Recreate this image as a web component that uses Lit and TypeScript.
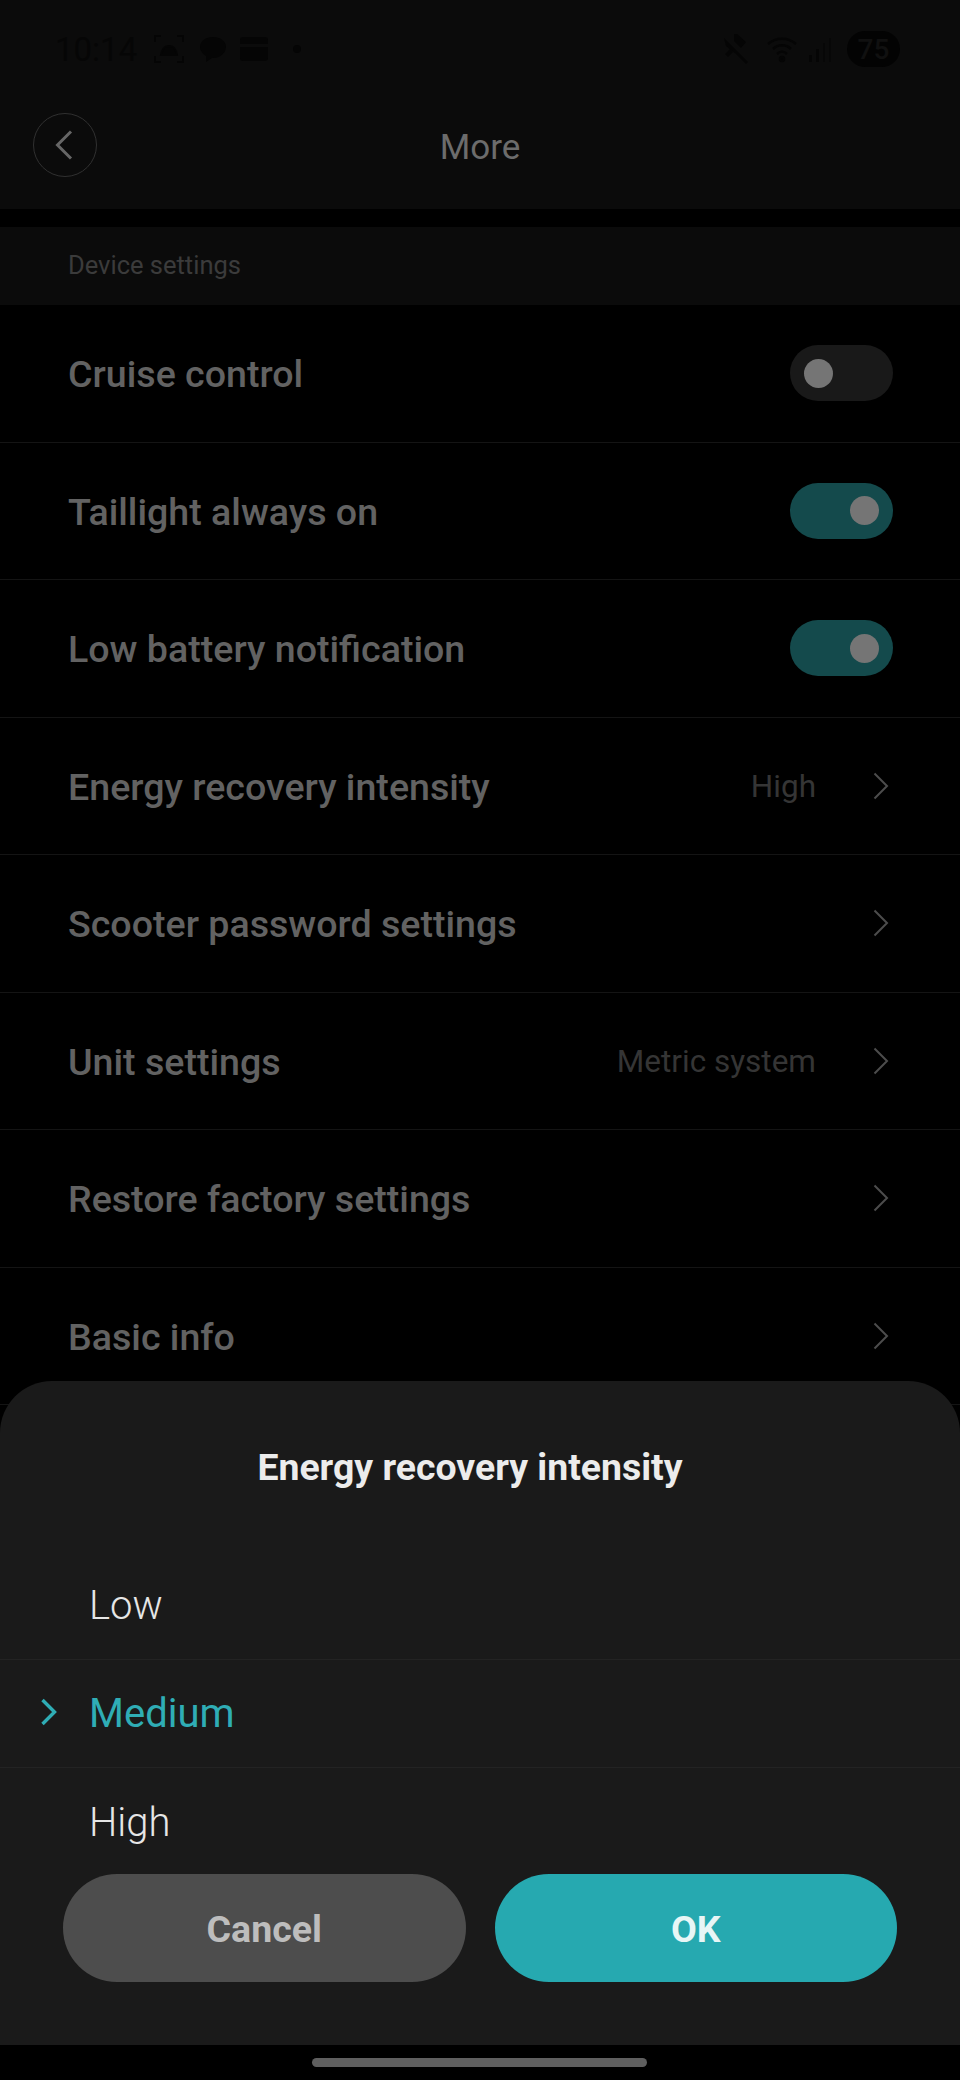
import { LitElement, html, css } from "lit";
import { customElement } from "lit/decorators.js";

type Row = { label: string; toggle?: boolean; on?: boolean; value?: string };

const rows: Row[] = [
  { label: "Cruise control", toggle: true, on: false },
  { label: "Taillight always on", toggle: true, on: true },
  { label: "Low battery notification", toggle: true, on: true },
  { label: "Energy recovery intensity", value: "High" },
  { label: "Scooter password settings" },
  { label: "Unit settings", value: "Metric system" },
  { label: "Restore factory settings" },
  { label: "Basic info" },
];

const options = ["Low", "Medium", "High"];

@customElement("app-root")
export class AppRoot extends LitElement {
  static styles = css`
    :host {
      display: block;
      width: 960px;
      height: 2080px;
      background: #000;
      font-family: Roboto, "Liberation Sans", sans-serif;
      overflow: hidden;
      position: relative;
    }
    .top {
      height: 209px;
      background: #0b0b0b;
      display: flex;
      flex-direction: column;
    }
    .status {
      height: 98px;
      padding: 0 55px;
      display: flex;
      align-items: center;
      justify-content: space-between;
      box-sizing: border-box;
    }
    .status-side {
      display: flex;
      align-items: center;
    }
    .time {
      font-size: 33px;
      width: 98px;
      color: #060606;
    }
    .battery {
      width: 53px;
      height: 36px;
      border-radius: 18px;
      background: #030303;
      color: #101010;
      font-size: 28px;
      font-weight: 500;
      display: flex;
      align-items: center;
      justify-content: center;
      margin-left: 15px;
      margin-right: 5px;
    }
    .nav {
      height: 94px;
      padding-left: 33px;
      display: flex;
      align-items: center;
      position: relative;
    }
    .back {
      width: 64px;
      height: 64px;
      box-sizing: border-box;
      border: 1px solid #303030;
      border-radius: 50%;
      display: flex;
      align-items: center;
      justify-content: center;
      padding-right: 3px;
    }
    .nav-title {
      position: absolute;
      left: 0;
      right: 0;
      top: 0;
      bottom: 0;
      display: flex;
      align-items: center;
      justify-content: center;
      font-size: 35px;
      color: #6c6c6c;
      padding-top: 5px;
    }
    .section {
      margin-top: 18px;
      height: 78px;
      background: #0b0b0b;
      padding: 0 0 3px 68px;
      box-sizing: border-box;
      display: flex;
      align-items: center;
      font-size: 25.5px;
      color: #3b3b3b;
    }
    .row {
      height: 137.5px;
      box-sizing: border-box;
      border-bottom: 1px solid #141414;
      padding: 0 71px 0 68px;
      display: flex;
      align-items: center;
      justify-content: space-between;
    }
    .label {
      font-size: 37.6px;
      font-weight: 500;
      color: #626262;
      padding-top: 2px;
    }
    .right {
      display: flex;
      align-items: center;
    }
    .value {
      font-size: 31.5px;
      color: #353535;
      margin-right: 57px;
      padding-top: 1px;
    }
    .switch {
      width: 103px;
      height: 56px;
      border-radius: 28px;
      background: #191919;
      margin-right: -4px;
      display: flex;
      align-items: center;
      padding: 0 14px;
      box-sizing: border-box;
    }
    .switch.on {
      background: #144a4c;
      justify-content: flex-end;
    }
    .knob {
      width: 29px;
      height: 29px;
      border-radius: 50%;
      background: #757575;
    }
    .sheet {
      position: absolute;
      left: 0;
      right: 0;
      top: 1381px;
      height: 664px;
      background: #1a1a1a;
      border-radius: 52px 52px 0 0;
    }
    .sheet-title {
      padding: 63px 20px 0 0;
      height: 124px;
      box-sizing: border-box;
      text-align: center;
      font-size: 37.4px;
      line-height: 46px;
      font-weight: 700;
      color: #ececec;
    }
    .options {
      height: 326px;
      overflow: hidden;
      margin-top: 46px;
    }
    .opt {
      height: 108.5px;
      box-sizing: border-box;
      border-bottom: 1px solid #232323;
      padding: 1px 0 0 89px;
      display: flex;
      align-items: center;
      font-size: 40px;
      font-weight: 300;
      color: #e6e6e6;
      position: relative;
    }
    .opt:last-child {
      border-bottom: none;
    }
    .opt.sel {
      color: #2fadb5;
      font-weight: 400;
    }
    .opt svg {
      position: absolute;
      left: 40px;
      top: 38px;
    }
    .buttons {
      position: absolute;
      left: 63px;
      right: 63px;
      top: 493px;
      display: flex;
      gap: 29px;
    }
    .btn {
      flex: 1;
      height: 108px;
      border-radius: 54px;
      display: flex;
      align-items: center;
      justify-content: center;
      font-size: 37.5px;
      font-weight: 700;
      padding-top: 2px;
      box-sizing: border-box;
    }
    .cancel {
      background: #4d4d4d;
      color: #bdbdbd;
    }
    .ok {
      background: #26a9b0;
      color: #e8f6f6;
    }
    .home {
      position: absolute;
      left: 312px;
      top: 2058px;
      width: 335px;
      height: 9px;
      border-radius: 5px;
      background: #5f5f5f;
    }
    .ic {
      display: block;
    }
    .ml10 { margin-left: 10px; }
    .ml12 { margin-left: 12px; }
    .ml14 { margin-left: 14px; }
    .ml16 { margin-left: 16px; }
    .ml24 { margin-left: 24px; }
  `;

  private chevron() {
    return html`<svg width="16" height="28" viewBox="0 0 16 28" fill="none">
      <path d="M1.5 1.5 14 14 1.5 26.5" stroke="#4c4c4c" stroke-width="2" />
    </svg>`;
  }

  private leftIcons() {
    const c = "#050505";
    return html`
      <svg class="ic" width="32" height="32" viewBox="0 0 32 32" fill="none" stroke=${c} stroke-width="2">
        <path d="M2 9V3h6M24 3h6v6M30 23v6h-6M8 29H2v-6" />
        <path d="M8 22c1-6 4-9 8-9s7 3 8 9z" fill=${c} />
      </svg>
      <svg class="ic ml14" width="28" height="30" viewBox="0 0 28 30" fill=${c}>
        <path d="M14 3C7 3 1 7 1 13c0 4 3 7 6 9v6l6-4h1c7 0 13-5 13-11S21 3 14 3z" />
      </svg>
      <svg class="ic ml12" width="30" height="28" viewBox="0 0 30 28" fill=${c}>
        <path d="M4 2h22a3 3 0 0 1 3 3v18a3 3 0 0 1-3 3H4a3 3 0 0 1-3-3V5a3 3 0 0 1 3-3zM1 9v3h28V9z" fill-rule="evenodd" />
      </svg>
      <svg class="ic ml24" width="8" height="8" viewBox="0 0 8 8" fill=${c}><circle cx="4" cy="4" r="4" /></svg>
    `;
  }

  private rightIcons() {
    const c = "#050505";
    return html`
      <svg class="ic" width="28" height="34" viewBox="0 0 28 34" fill=${c}>
        <path d="M2 6 26 30l-2 2L14 22 4 14zM12 2h3l9 8-5 6-7-7zM3 22l5-5 3 3-5 5z" />
      </svg>
      <svg class="ic ml16" width="32" height="28" viewBox="0 0 32 28" fill="none" stroke=${c} stroke-width="2.5">
        <path d="M2 9c8-7 20-7 28 0M7 14c5-5 13-5 18 0M11 19c3-3 7-3 10 0" />
        <circle cx="16" cy="24" r="2" fill=${c} />
      </svg>
      <svg class="ic ml10" width="24" height="28" viewBox="0 0 24 28" fill=${c}>
        <rect x="1" y="20" width="3" height="7" /><rect x="8" y="14" width="3" height="13" />
        <rect x="15" y="8" width="2" height="19" opacity=".6" /><rect x="21" y="3" width="2" height="24" opacity=".6" />
      </svg>
    `;
  }

  render() {
    return html`
      <div class="top">
        <div class="status">
          <div class="status-side"><span class="time">10:14</span>${this.leftIcons()}</div>
          <div class="status-side">${this.rightIcons()}<span class="battery">75</span></div>
        </div>
        <div class="nav">
          <div class="nav-title">More</div>
          <div class="back">
            <svg width="18" height="30" viewBox="0 0 18 30" fill="none">
              <path d="M16 1.5 2.5 15 16 28.5" stroke="#666" stroke-width="3" />
            </svg>
          </div>
        </div>
      </div>
      <div class="section">Device settings</div>
      ${rows.map(
        (r) => html`
          <div class="row">
            <span class="label">${r.label}</span>
            <div class="right">
              ${r.toggle
                ? html`<div class="switch ${r.on ? "on" : ""}"><div class="knob"></div></div>`
                : html`${r.value ? html`<span class="value">${r.value}</span>` : ""}${this.chevron()}`}
            </div>
          </div>
        `
      )}
      <div class="sheet">
        <div class="sheet-title">Energy recovery intensity</div>
        <div class="options">
          ${options.map(
            (o) => html`
              <div class="opt ${o === "Medium" ? "sel" : ""}">
                ${o === "Medium"
                  ? html`<svg width="18" height="28" viewBox="0 0 18 28" fill="none">
                      <path d="M2.5 2 14.5 14 2.5 26" stroke="#2fadb5" stroke-width="3.4" />
                    </svg>`
                  : ""}
                ${o}
              </div>
            `
          )}
        </div>
        <div class="buttons">
          <div class="btn cancel">Cancel</div>
          <div class="btn ok">OK</div>
        </div>
      </div>
      <div class="home"></div>
    `;
  }
}
